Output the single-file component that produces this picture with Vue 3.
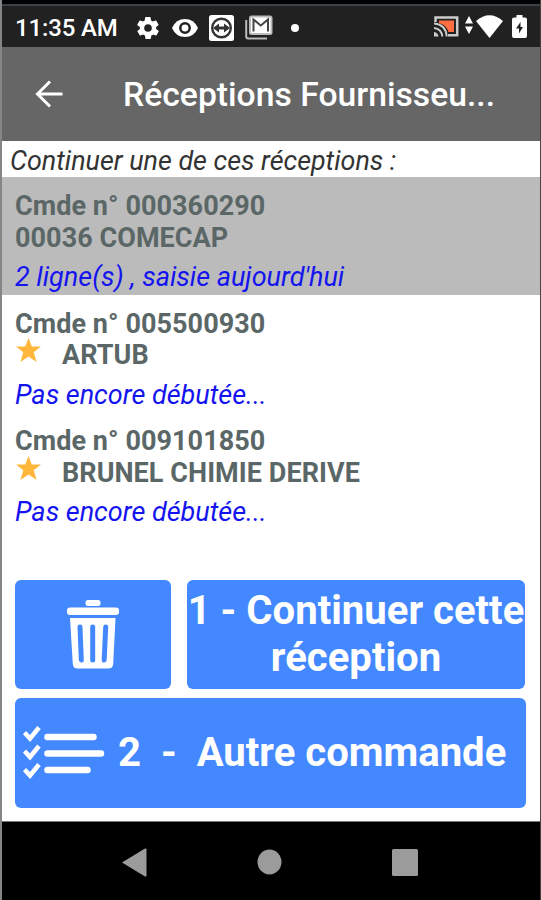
<script setup>
import { ref } from 'vue';

const selected = ref('000360290');

const receptions = [
    {
        number: '000360290',
        supplier: '00036 COMECAP',
        starred: false,
        status: "2 ligne(s) , saisie aujourd'hui",
    },
    {
        number: '005500930',
        supplier: 'ARTUB',
        starred: true,
        status: 'Pas encore débutée...',
    },
    {
        number: '009101850',
        supplier: 'BRUNEL CHIMIE DERIVE',
        starred: true,
        status: 'Pas encore débutée...',
    },
];
</script>

<template>
    <div class="device">
        <div class="status-bar">
            <span class="clock">11:35 AM</span>
            <svg class="icon-gear" width="24" height="24" viewBox="1 1 22 22">
                <path fill="#fff" fill-rule="evenodd" d="M19.4 13c0-.3.1-.6.1-1s0-.7-.1-1l2.1-1.6c.2-.2.3-.4.1-.7l-2-3.4c-.1-.2-.4-.3-.6-.2l-2.5 1c-.5-.4-1.1-.7-1.7-1l-.4-2.6c0-.3-.2-.5-.5-.5h-4c-.2 0-.5.2-.5.4l-.4 2.7c-.6.2-1.2.6-1.7 1l-2.5-1c-.2-.1-.5 0-.6.2l-2 3.4c-.1.3 0 .6.1.7L4.6 11c0 .3-.1.7-.1 1s0 .7.1 1l-2.1 1.6c-.2.2-.3.4-.1.7l2 3.4c.1.2.4.3.6.2l2.5-1c.5.4 1.1.7 1.7 1l.4 2.6c0 .3.2.5.5.5h4c.2 0 .5-.2.5-.4l.4-2.7c.6-.2 1.2-.6 1.7-1l2.5 1c.2.1.5 0 .6-.2l2-3.4c.1-.2.1-.5-.1-.7zM12 15.5a3.500 3.500 0 1 1 0-7 3.500 3.500 0 0 1 0 7z" />
            </svg>
            <svg class="icon-eye" width="26" height="20" viewBox="0 0 26 20">
                <path fill="#fff" d="M0 10Q4 1 13 1t13 9q-4 9-13 9T0 10z" />
                <circle cx="13" cy="10" r="4.7" fill="#fff" stroke="#212121" stroke-width="2.5" />
            </svg>
            <svg class="icon-remote" width="25" height="26" viewBox="0 0 25 26">
                <rect width="25" height="26" rx="2.5" fill="#fff" />
                <circle cx="12.5" cy="13" r="9.3" fill="#fff" stroke="#333" stroke-width="2.4" />
                <path fill="#333" d="M4 13l6-4.500v3h5v-3l6 4.500-6 4.500v-3h-5v3z" />
            </svg>
            <svg class="icon-mail" width="28" height="25" viewBox="0 0 28 25">
                <path fill="none" stroke="#bbb" stroke-width="2" d="M1.2 5v16.5q0 2 2 2H22" />
                <rect x="5" y="1.5" width="21.5" height="17.5" rx="1.5" fill="#fff" stroke="#bbb" stroke-width="2" />
                <path fill="none" stroke="#444" stroke-width="2" d="M8.5 16.5V4.500l7.300 6 7.200-6v12" />
            </svg>
            <span class="notification-dot"></span>
            <svg class="icon-cast" width="25" height="21" viewBox="0 0 25 21">
                <path fill="none" stroke="#ccc" stroke-width="2.5" d="M1.5 6V1.500h21.700v17.800H14" />
                <path fill="#ff6e40" d="M5 4.500h15V16h-5.500Q12 8.500 5 7z" />
                <path fill="none" stroke="#ccc" stroke-width="2" d="M0 7.500q12 1 12.700 13M0 12q7.500.8 8.300 8.500" />
                <path fill="#ccc" d="M0 16q4 .5 4.500 4.500H0z" />
            </svg>
            <svg class="icon-data" width="8" height="18" viewBox="0 0 8 18">
                <path fill="#fff" d="M4 0l4 7.500H0zM4 18l4-7.500H0z" />
            </svg>
            <svg class="icon-wifi" width="27" height="23" viewBox="0 0 27 23">
                <path fill="#fff" d="M0 6Q13.500-5.500 27 6L13.500 23z" />
            </svg>
            <svg class="icon-battery" width="15" height="23" viewBox="0 0 15 23">
                <path fill="#fff" d="M4.500 0h6v2.500H13q2 0 2 2V21q0 2-2 2H2q-2 0-2-2V4.500q0-2 2-2h2.500z" />
                <path fill="#212121" d="M8.500 7l-4.500 6.500h3v5l4-6.500H8.500z" />
            </svg>
        </div>

        <header class="app-bar">
            <button class="back" type="button" aria-label="Retour">
                <svg width="28" height="28" viewBox="0 0 28 28">
                    <path fill="none" stroke="#fff" stroke-width="3" d="M27.500 14H2.500M15 1.500L2.500 14 15 26.500" />
                </svg>
            </button>
            <h1>Réceptions Fournisseu...</h1>
        </header>

        <main class="content">
            <p class="intro">Continuer une de ces réceptions :</p>

            <ul class="receptions">
                <li
                    v-for="item in receptions"
                    :key="item.number"
                    class="reception"
                    :class="{ 'is-selected': item.number === selected }"
                    @click="selected = item.number"
                >
                    <div class="line">Cmde n° {{ item.number }}</div>
                    <div class="line supplier">
                        <svg v-if="item.starred" class="star" width="25" height="24" viewBox="0 0 25 24">
                            <path fill="#ffb73b" d="M12.500 0l3.300 8.600H25l-7.300 5.700L20.600 24l-8.100-5.600L4.400 24l2.900-9.700L0 8.600h9.200z" />
                        </svg>
                        <span>{{ item.supplier }}</span>
                    </div>
                    <div class="status">{{ item.status }}</div>
                </li>
            </ul>

            <div class="actions">
                <button class="action delete" type="button" aria-label="Supprimer">
                    <svg width="52" height="69" viewBox="0 0 52 69">
                        <rect x="18.5" y="0" width="15" height="6" rx="2.5" fill="#fff" />
                        <rect x="0" y="7.5" width="52" height="7.5" rx="3" fill="#fff" />
                        <path fill="#fff" d="M3 18h45.500l-2.300 46q-.4 4.500-5 4.500H10.500q-4.300 0-4.700-4.500z" />
                        <path fill="none" stroke="#4488ff" stroke-width="5" stroke-linecap="round" d="M13 27l1.300 33M25.700 27v33M38.700 27l-1.500 33" />
                    </svg>
                </button>
                <button class="action continue" type="button">
                    <span>1 - Continuer cette</span>
                    <span>réception</span>
                </button>
            </div>

            <button class="action other" type="button">
                <svg width="82" height="53" viewBox="0 0 82 53">
                    <path fill="none" stroke="#fff" stroke-width="4.5" d="M1.500 6.500l5.500 6L16 1.500M1.500 25l5.500 6 9-11M1.500 43.500l5.500 6 9-11" />
                    <path fill="none" stroke="#fff" stroke-width="6.5" stroke-linecap="round" d="M24.500 11h46M24.500 27.500h53.500M24.500 44h40" />
                </svg>
                <span class="other-label">2&nbsp; -&nbsp; Autre commande</span>
            </button>
        </main>

        <nav class="nav-bar">
            <svg width="25" height="29" viewBox="0 0 25 29">
                <path fill="#9b9b9b" d="M0 14.500L23 .5q1.500-.5 1.500 1v26q0 1.500-1.500 1z" />
            </svg>
            <svg width="25" height="26" viewBox="0 0 25 26">
                <ellipse cx="12.5" cy="13" rx="12" ry="12.5" fill="#9b9b9b" />
            </svg>
            <svg width="26" height="27" viewBox="0 0 26 27">
                <rect width="26" height="27" rx="1.5" fill="#9b9b9b" />
            </svg>
        </nav>
    </div>
</template>

<style>
body {
    margin: 0;
    background: #000;
}
</style>

<style scoped>
.device {
    box-sizing: border-box;
    width: 541px;
    height: 900px;
    padding-top: 4px;
    display: flex;
    flex-direction: column;
    border-left: 2px solid #858585;
    border-right: 1px solid #444;
    background: #000;
    font-family: Roboto, 'Liberation Sans', sans-serif;
    overflow: hidden;
}

button {
    margin: 0;
    padding: 0;
    border: 0;
    background: none;
    color: inherit;
    font: inherit;
    cursor: pointer;
}

svg {
    display: block;
    flex: none;
}

.status-bar {
    box-sizing: border-box;
    height: 43px;
    flex: none;
    display: flex;
    align-items: center;
    padding: 2px 12px 0 13px;
    border-top: 2px solid #3a4147;
    background: #212121;
    color: #fff;
}

.clock {
    width: 102px;
    flex: none;
    font-size: 24px;
    font-weight: 500;
    letter-spacing: -0.15px;
    white-space: nowrap;
}

.icon-gear {
    margin-left: 19px;
}

.icon-eye {
    margin-left: 12px;
}

.icon-remote {
    margin-left: 11px;
}

.icon-mail {
    margin-left: 11px;
}

.notification-dot {
    width: 8px;
    height: 8px;
    margin-left: 18px;
    border-radius: 50%;
    background: #fff;
}

.icon-cast {
    margin-left: auto;
}

.icon-data {
    margin: 0 3px 6px 6px;
}

.icon-battery {
    margin: 0 1px 3px 9px;
}

.icon-cast,
.icon-wifi {
    margin-bottom: 2px;
}

.app-bar {
    height: 94px;
    flex: none;
    display: flex;
    align-items: center;
    background: #666;
    color: #fff;
}

.back {
    margin-left: 33px;
}

.app-bar h1 {
    margin: 0 0 0 60px;
    font-size: 33.7px;
    font-weight: 500;
    white-space: nowrap;
}

.content {
    box-sizing: border-box;
    height: 681px;
    flex: none;
    border-bottom: 1px solid #777;
    background: #fff;
}

.intro {
    height: 36px;
    margin: 0;
    padding-left: 8px;
    color: #333;
    font-size: 26.9px;
    font-style: italic;
    line-height: 41px;
    white-space: nowrap;
}

.receptions {
    margin: 0;
    padding: 0;
    list-style: none;
}

.reception {
    box-sizing: border-box;
    height: 117.5px;
    padding: 13px 13px 0;
    white-space: nowrap;
}

.reception.is-selected {
    background: #bbb;
}

.line {
    height: 31.5px;
    color: #5b6767;
    font-size: 27px;
    font-weight: 700;
    line-height: 32px;
    letter-spacing: 0.06px;
}

.supplier {
    display: flex;
}

.star {
    margin: -1px 21px 0 1px;
}

.status {
    margin-top: 8px;
    color: #1414ee;
    font-size: 27px;
    font-style: italic;
    line-height: 32px;
}

.actions {
    display: flex;
    gap: 16px;
    margin: 50px 0 9px 13px;
}

.action {
    display: flex;
    align-items: center;
    border-radius: 6px;
    background: #4488ff;
    color: #fff;
    font-size: 40.1px;
    font-weight: 700;
    line-height: 47px;
    white-space: nowrap;
}

.delete {
    width: 156px;
    height: 109px;
    justify-content: center;
}

.continue {
    box-sizing: border-box;
    width: 338px;
    height: 109px;
    flex-direction: column;
    padding-top: 7px;
}

.other {
    width: 511px;
    height: 110px;
    margin-left: 13px;
    padding-left: 8px;
}

.other-label {
    margin-left: 13px;
}

.nav-bar {
    flex: 1;
    display: flex;
    align-items: center;
    justify-content: space-between;
    padding: 2px 122px 0 120px;
}
</style>
